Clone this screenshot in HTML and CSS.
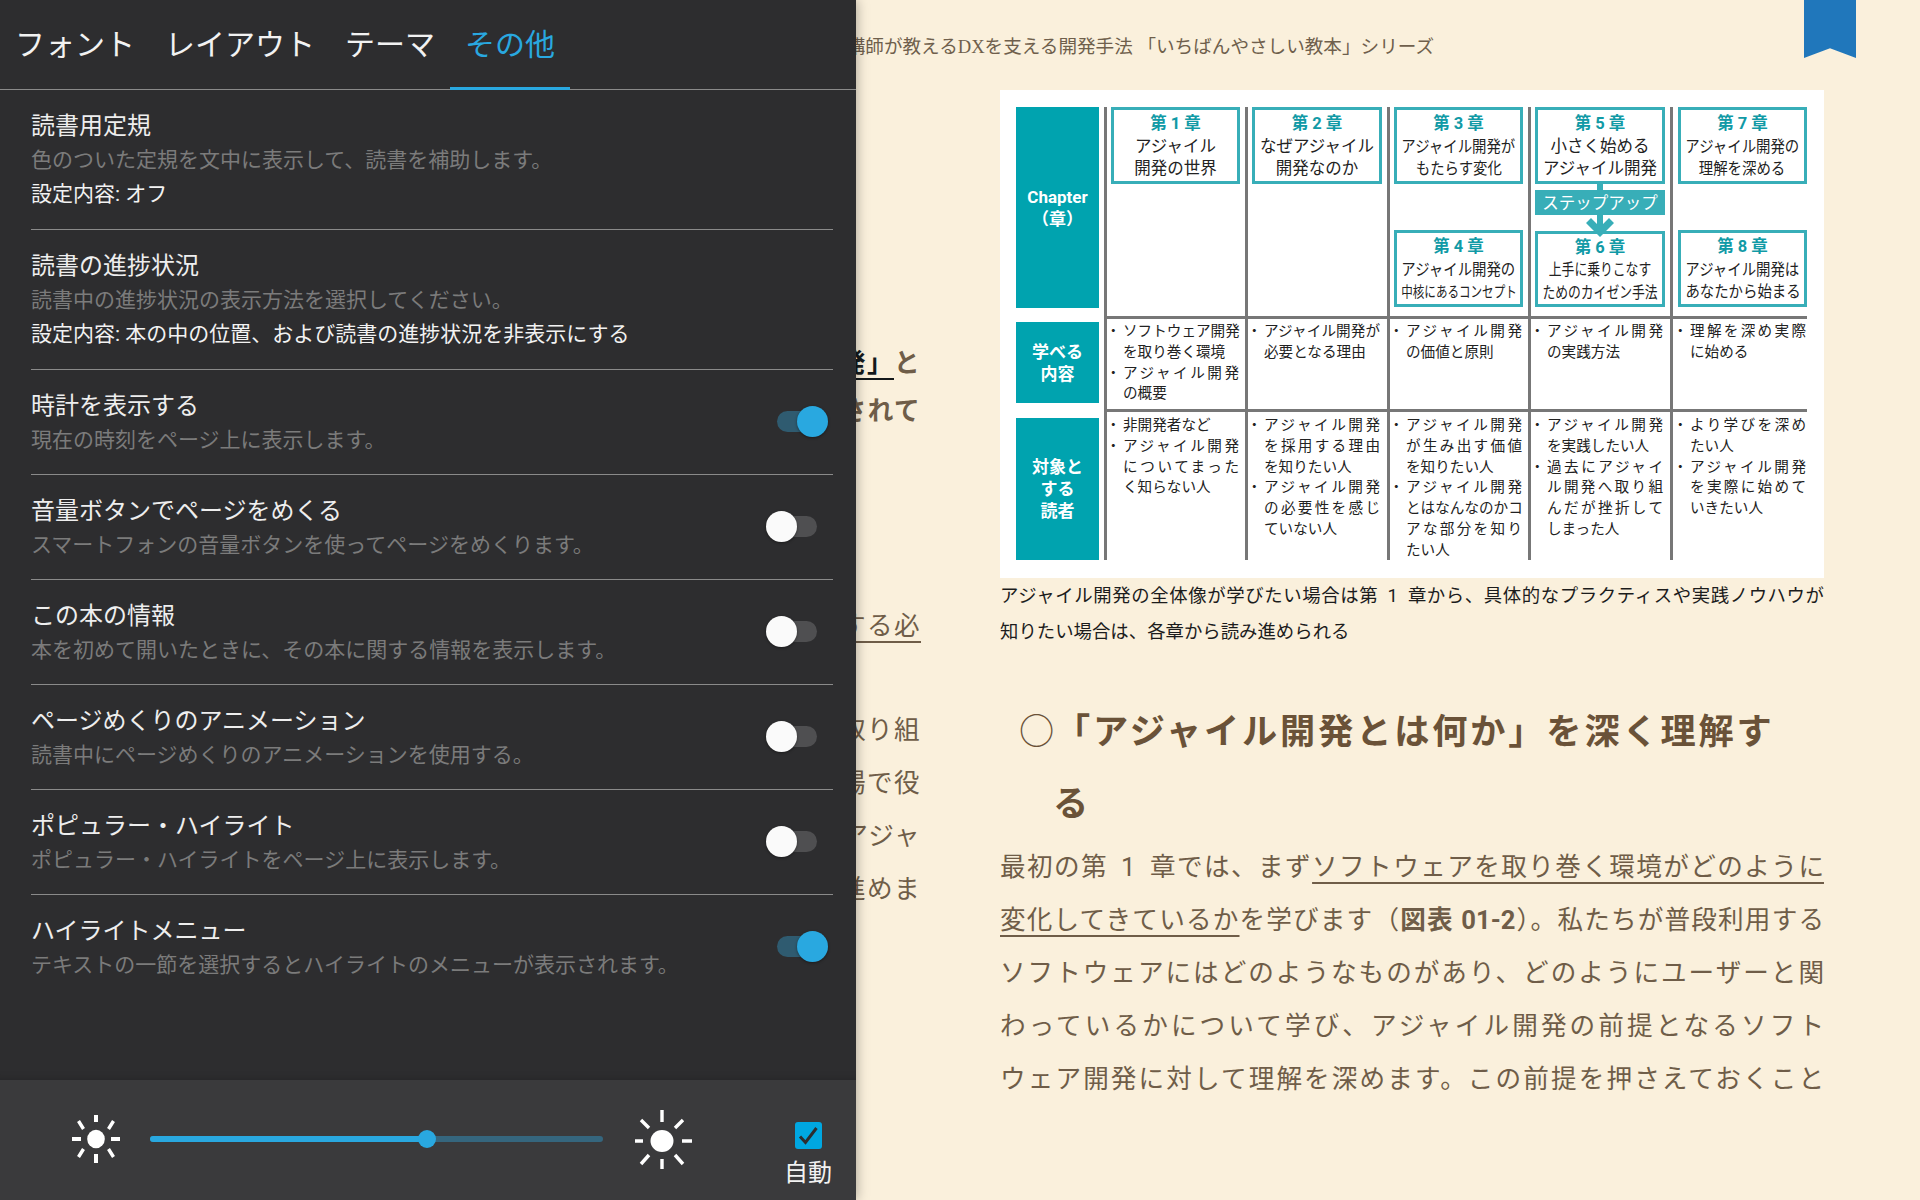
FILE: index.html
```html
<!DOCTYPE html>
<html lang="ja">
<head>
    <meta charset="UTF-8">
    <meta name="viewport" content="width=device-width, initial-scale=1.0">
    <title>読書設定</title>
    <link rel="stylesheet" href="styles.css">
</head>
<body>
<div class="reader">
    <!-- book page -->
    <header class="running-head">式講師が教えるDXを支える開発手法 「いちばんやさしい教本」シリーズ</header>
    <div class="bookmark"></div>

    <div class="columns">
        <div class="col-left">
            <p class="frag strong first"><span class="mark">発」</span>と</p>
            <p class="frag strong second">されて</p>
            <p class="frag gap1"><u>する必</u></p>
            <p class="frag gap2">取り組</p>
            <p class="frag">場で役</p>
            <p class="frag">アジャ</p>
            <p class="frag">進めま</p>
        </div>

        <div class="col-right">
            <div class="diagram">
                <div class="label label-1">Chapter<br>（章）</div>
                <div class="cell top">
                    <div class="box"><b>第 1 章</b><span>アジャイル</span><span>開発の世界</span></div>
                </div>
                <div class="cell top">
                    <div class="box"><b>第 2 章</b><span>なぜアジャイル</span><span>開発なのか</span></div>
                </div>
                <div class="cell top split">
                    <div class="box"><b>第 3 章</b><span class="fs14">アジャイル開発が</span><span class="fs14">もたらす変化</span></div>
                    <div class="box"><b>第 4 章</b><span class="fs14">アジャイル開発の</span><span class="fs12">中核にあるコンセプト</span></div>
                </div>
                <div class="cell top split">
                    <div class="box"><b>第 5 章</b><span>小さく始める</span><span>アジャイル開発</span></div>
                    <div class="step">
                        <i class="stem"></i>
                        <div class="step-bar">ステップアップ</div>
                        <svg class="step-arrow" width="28" height="22" viewBox="0 0 28 22"><path d="M11 0h6v9l6-6 5 5-14 14L0 8l5-5 6 6z"/></svg>
                    </div>
                    <div class="box"><b>第 6 章</b><span class="fs13">上手に乗りこなす</span><span class="fs13">ためのカイゼン手法</span></div>
                </div>
                <div class="cell top split last">
                    <div class="box"><b>第 7 章</b><span class="fs14">アジャイル開発の</span><span class="fs14">理解を深める</span></div>
                    <div class="box"><b>第 8 章</b><span class="fs14">アジャイル開発は</span><span class="fs14">あなたから始まる</span></div>
                </div>

                <div class="label label-2">学べる<br>内容</div>
                <div class="cell text">
                    <ul>
                        <li><div><span class="j">ソフトウェア開発</span><span>を取り巻く環境</span></div></li>
                        <li><div><span class="j">アジャイル開発</span><span>の概要</span></div></li>
                    </ul>
                </div>
                <div class="cell text">
                    <ul><li><div><span class="j">アジャイル開発が</span><span>必要となる理由</span></div></li></ul>
                </div>
                <div class="cell text">
                    <ul><li><div><span class="j">アジャイル開発</span><span>の価値と原則</span></div></li></ul>
                </div>
                <div class="cell text">
                    <ul><li><div><span class="j">アジャイル開発</span><span>の実践方法</span></div></li></ul>
                </div>
                <div class="cell text last">
                    <ul><li><div><span class="j">理解を深め実際</span><span>に始める</span></div></li></ul>
                </div>

                <div class="label label-3">対象と<br>する<br>読者</div>
                <div class="cell text lower">
                    <ul>
                        <li><div><span>非開発者など</span></div></li>
                        <li><div><span class="j">アジャイル開発</span><span class="j">についてまった</span><span>く知らない人</span></div></li>
                    </ul>
                </div>
                <div class="cell text lower">
                    <ul>
                        <li><div><span class="j">アジャイル開発</span><span class="j">を採用する理由</span><span>を知りたい人</span></div></li>
                        <li><div><span class="j">アジャイル開発</span><span class="j">の必要性を感じ</span><span>ていない人</span></div></li>
                    </ul>
                </div>
                <div class="cell text lower">
                    <ul>
                        <li><div><span class="j">アジャイル開発</span><span class="j">が生み出す価値</span><span>を知りたい人</span></div></li>
                        <li><div><span class="j">アジャイル開発</span><span class="j">とはなんなのかコ</span><span class="j">アな部分を知り</span><span>たい人</span></div></li>
                    </ul>
                </div>
                <div class="cell text lower">
                    <ul>
                        <li><div><span class="j">アジャイル開発</span><span>を実践したい人</span></div></li>
                        <li><div><span class="j">過去にアジャイ</span><span class="j">ル開発へ取り組</span><span class="j">んだが挫折して</span><span>しまった人</span></div></li>
                    </ul>
                </div>
                <div class="cell text lower last">
                    <ul>
                        <li><div><span class="j">より学びを深め</span><span>たい人</span></div></li>
                        <li><div><span class="j">アジャイル開発</span><span class="j">を実際に始めて</span><span>いきたい人</span></div></li>
                    </ul>
                </div>
            </div>

            <p class="caption">
                <span class="line">アジャイル開発の全体像が学びたい場合は第&ensp;1&ensp;章から、具体的なプラクティスや実践ノウハウが</span>
                <span>知りたい場合は、各章から読み進められる</span>
            </p>

            <h2 class="section-title"><span class="circle">○</span>「アジャイル開発とは何か」を深く理解する</h2>

            <p class="body-text">
                <span class="line">最初の第&ensp;1&ensp;章では、まず<u>ソフトウェアを取り巻く環境がどのように</u></span>
                <span class="line"><u>変化してきているか</u>を学びます（<b>図表 01-2</b>）。私たちが普段利用する</span>
                <span class="line">ソフトウェアにはどのようなものがあり、どのようにユーザーと関</span>
                <span class="line">わっているかについて学び、アジャイル開発の前提となるソフト</span>
                <span class="line">ウェア開発に対して理解を深めます。この前提を押さえておくこと</span>
            </p>
        </div>
    </div>

    <!-- settings panel, slides over the page -->
    <aside class="panel">
        <nav class="tabs">
            <a>フォント</a>
            <a>レイアウト</a>
            <a>テーマ</a>
            <a class="active">その他</a>
        </nav>

        <div class="settings">
            <div class="row">
                <div>
                    <h3>読書用定規</h3>
                    <p class="sub">色のついた定規を文中に表示して、読書を補助します。</p>
                    <p class="value">設定内容: オフ</p>
                </div>
            </div>
            <div class="row">
                <div>
                    <h3>読書の進捗状況</h3>
                    <p class="sub">読書中の進捗状況の表示方法を選択してください。</p>
                    <p class="value">設定内容: 本の中の位置、および読書の進捗状況を非表示にする</p>
                </div>
            </div>
            <div class="row">
                <div>
                    <h3>時計を表示する</h3>
                    <p class="sub">現在の時刻をページ上に表示します。</p>
                </div>
                <div class="toggle on"></div>
            </div>
            <div class="row">
                <div>
                    <h3>音量ボタンでページをめくる</h3>
                    <p class="sub">スマートフォンの音量ボタンを使ってページをめくります。</p>
                </div>
                <div class="toggle"></div>
            </div>
            <div class="row">
                <div>
                    <h3>この本の情報</h3>
                    <p class="sub">本を初めて開いたときに、その本に関する情報を表示します。</p>
                </div>
                <div class="toggle"></div>
            </div>
            <div class="row">
                <div>
                    <h3>ページめくりのアニメーション</h3>
                    <p class="sub">読書中にページめくりのアニメーションを使用する。</p>
                </div>
                <div class="toggle"></div>
            </div>
            <div class="row">
                <div>
                    <h3>ポピュラー・ハイライト</h3>
                    <p class="sub">ポピュラー・ハイライトをページ上に表示します。</p>
                </div>
                <div class="toggle"></div>
            </div>
            <div class="row">
                <div>
                    <h3>ハイライトメニュー</h3>
                    <p class="sub">テキストの一節を選択するとハイライトのメニューが表示されます。</p>
                </div>
                <div class="toggle on"></div>
            </div>
        </div>

        <div class="brightness">
            <svg class="sun-small" width="48" height="48" viewBox="-24 -24 48 48">
                <ellipse rx="8.800" ry="9.300" fill="#fff"/>
                <g stroke="#fff" stroke-width="4">
                    <path d="M0-24v7M0 15v9M-24 0h9M15 0h9"/>
                    <path stroke-width="3.400" d="M-17.500-18l5 8M17.500-18l-5 8M-17.500 18l5-8M17.500 18l-5-8"/>
                </g>
            </svg>
            <div class="slider">
                <div class="slider-fill"></div>
                <div class="slider-thumb"></div>
            </div>
            <svg class="sun-big" width="58" height="60" viewBox="-28 -31 58 60">
                <ellipse rx="11.500" ry="11" fill="#fff"/>
                <g stroke="#fff" stroke-width="3.400">
                    <path d="M0-31v12M0 18v10M-27 0h8M20 0h10"/>
                    <path d="M-21-21l8 8M21-21l-8 8M-21 23l8-9M21 23l-8-9"/>
                </g>
            </svg>
            <div class="auto">
                <svg width="27" height="27" viewBox="0 0 27 27">
                    <rect width="27" height="27" rx="3" fill="#00a7e1"/>
                    <path d="M5 14.500l5.500 6L21.500 6" fill="none" stroke="#2d2d2f" stroke-width="3"/>
                </svg>
                <span>自動</span>
            </div>
        </div>
    </aside>
</div>
</body>
</html>
```

FILE: styles.css
```css
* {
    box-sizing: border-box;
}
html, body {
    margin: 0;
    padding: 0;
}
body {
    font-family: Roboto, "Noto Sans CJK JP", sans-serif;
    background-color: #faf0dc;
}
p, h2, h3, ul {
    margin: 0;
    padding: 0;
}

.reader {
    position: relative;
    width: 1920px;
    height: 1200px;
    overflow: hidden;
}

/* book page */
.running-head {
    width: 1434px;
    height: 90px;
    padding-top: 34px;
    font-family: "Liberation Serif", "Noto Sans CJK JP", serif;
    font-size: 18.600px;
    line-height: 26px;
    color: #6f5f4c;
    text-align: right;
    white-space: nowrap;
}
.bookmark {
    position: absolute;
    top: 0;
    left: 1804px;
    width: 52px;
    height: 58px;
    background-color: #2077bb;
    clip-path: polygon(0 0, 100% 0, 100% 100%, 50% 83%, 0 100%);
}
.columns {
    display: flex;
}
.col-left {
    width: 921px;
    flex-shrink: 0;
    color: #6f5d48;
    font-size: 25.600px;
    letter-spacing: 1.400px;
    text-align: right;
}
.frag {
    height: 53px;
    line-height: 53px;
    white-space: nowrap;
}
.frag u {
    text-underline-offset: 6px;
}
.frag.first {
    margin-top: 249px;
    height: 48px;
    line-height: 48px;
}
.frag.second {
    height: 48px;
    line-height: 48px;
}
.frag.strong {
    font-weight: 700;
}
.frag.gap1 {
    margin-top: 165px;
}
.frag.gap2 {
    margin-top: 51px;
}
.mark {
    color: #14191b;
    text-decoration: underline;
    text-underline-offset: 6px;
}

.col-right {
    width: 824px;
    margin-left: 79px;
    flex-shrink: 0;
}

/* chapter chart */
.diagram {
    display: grid;
    grid-template-columns: 88px 141px 142px 141px 142px 137px;
    grid-template-rows: 209px 93px 151px;
    padding: 17px 0 18px 16px;
    height: 488px;
    background-color: #fff;
    color: #222;
}
.label {
    display: flex;
    align-items: center;
    justify-content: center;
    width: 83px;
    background-color: #00a3af;
    color: #fff;
    font-weight: 700;
    font-size: 17px;
    line-height: 22px;
    text-align: center;
}
.label-1 {
    margin-bottom: 8px;
}
.label-2 {
    margin: 6px 0;
    line-height: 22px;
}
.label-3 {
    margin-top: 9px;
}
.cell {
    border-left: 3px solid #777;
    padding: 0 5px 0 4px;
}
.cell.last {
    padding-left: 5px;
    padding-right: 0;
}
.cell.split {
    display: flex;
    flex-direction: column;
    justify-content: space-between;
    padding-bottom: 9px;
}
.box {
    height: 77px;
    border: 3px solid #38aeb8;
    display: flex;
    flex-direction: column;
    align-items: center;
    padding-top: 3px;
    font-size: 16.500px;
    line-height: 22.500px;
    white-space: nowrap;
}
.box b {
    color: #119aa6;
    font-size: 16.500px;
}
/* the long lines of the chart are set condensed */
.fs14 {
    font-size: 16px;
    transform: scaleX(0.9);
}
.fs13 {
    font-size: 16px;
    transform: scaleX(0.8);
}
.fs12 {
    font-size: 15px;
    transform: scaleX(0.77);
}
.step {
    display: flex;
    flex-direction: column;
    align-items: center;
    height: 47px;
}
.stem {
    width: 6px;
    height: 6px;
    flex-shrink: 0;
    background-color: #38aeb8;
}
.step-bar {
    width: 100%;
    height: 25px;
    flex-shrink: 0;
    line-height: 27px;
    background-color: #38aeb8;
    color: #fff;
    font-size: 16.500px;
    text-align: center;
    white-space: nowrap;
}
.step-arrow {
    flex-shrink: 0;
    fill: #38aeb8;
}
.cell.text {
    border-top: 3px solid #777;
    padding-top: 2px;
    font-size: 14.600px;
    line-height: 20.800px;
}
.cell.lower {
    padding-top: 3px;
}
.cell ul {
    list-style: none;
}
.cell li {
    display: flex;
}
.cell li::before {
    content: "・";
    flex: 0 0 17px;
    margin-left: -5px;
}
.cell li div {
    width: 116px;
}
.cell li span {
    display: block;
    white-space: nowrap;
}
.cell li .j {
    text-align: justify;
    text-align-last: justify;
}

.caption {
    font-size: 18.400px;
    line-height: 36px;
    color: #1c1c1c;
}
.caption span,
.body-text .line {
    display: block;
}
.caption .line,
.body-text .line {
    text-align: justify;
    text-align-last: justify;
    white-space: nowrap;
}
.section-title {
    margin-top: 46px;
    padding: 0 40px 0 53px;
    text-indent: -36px;
    font-size: 35.200px;
    font-weight: 700;
    line-height: 72px;
    letter-spacing: 2.850px;
    color: #6a5238;
}
.circle {
    font-weight: 400;
    margin-left: 2px;
    letter-spacing: 0.850px;
}
.body-text {
    margin-top: 1px;
    font-size: 25.600px;
    line-height: 53px;
    color: #6f5d48;
}
.body-text u {
    text-decoration-thickness: 2px;
    text-underline-offset: 6px;
}

/* settings panel */
.panel {
    position: absolute;
    top: 0;
    left: 0;
    width: 856px;
    height: 1200px;
    display: flex;
    flex-direction: column;
    background-color: #2d2d2f;
    box-shadow: 0 0 12px rgba(0, 0, 0, 0.35);
    color: #f2f2f2;
}
.tabs {
    display: flex;
    height: 90px;
    border-bottom: 1px solid #8a8a8a;
}
.tabs a {
    padding: 0 15px;
    height: 90px;
    font-size: 30px;
    line-height: 89px;
    white-space: nowrap;
}
.tabs a.active {
    color: #29a8e0;
    border-bottom: 3px solid #29a8e0;
}
.settings {
    flex: 1;
    padding-left: 31px;
    padding-right: 23px;
    box-shadow: inset 0 -10px 10px -10px rgba(0, 0, 0, 0.2);
}
.row {
    display: flex;
    justify-content: space-between;
    align-items: center;
    padding: 19px 16px 17px 0;
    border-bottom: 1px solid #8a8a8a;
}
.row:last-child {
    border-bottom: none;
}
.row h3 {
    font-size: 24px;
    font-weight: 400;
    line-height: 34px;
    color: #eee;
}
.sub {
    font-size: 21px;
    line-height: 34px;
    color: #7b7b7b;
}
.value {
    margin-bottom: 1px;
    font-size: 21px;
    line-height: 34px;
    color: #f2f2f2;
}
.toggle {
    position: relative;
    width: 40px;
    height: 21px;
    margin-bottom: 4px;
    border-radius: 11px;
    background-color: #4f4f51;
}
.toggle::after {
    content: "";
    position: absolute;
    top: -5px;
    left: -11px;
    width: 31px;
    height: 31px;
    border-radius: 50%;
    background-color: #fafafa;
    box-shadow: 0 1px 3px rgba(0, 0, 0, 0.4);
}
.toggle.on {
    background-color: #2f5b70;
}
.toggle.on::after {
    left: 20px;
    background-color: #29a8e0;
}

/* brightness bar */
.brightness {
    display: flex;
    align-items: center;
    height: 120px;
    padding-left: 72px;
    background-color: #3a3a3c;
}
.sun-small {
    flex-shrink: 0;
    margin-top: -2px;
}
.slider {
    position: relative;
    width: 453px;
    height: 6px;
    margin: -2px 31px 0 30px;
    border-radius: 3px;
    background-color: #35667e;
}
.slider-fill {
    width: 61%;
    height: 100%;
    border-radius: 3px;
    background-color: #29a8e0;
}
.slider-thumb {
    position: absolute;
    top: -6px;
    left: 268px;
    width: 18px;
    height: 18px;
    border-radius: 50%;
    background-color: #29a8e0;
}
.sun-big {
    flex-shrink: 0;
}
.auto {
    display: flex;
    flex-direction: column;
    align-items: center;
    margin-left: 92px;
    margin-top: 30px;
    font-size: 24px;
    line-height: 32px;
    color: #f2f2f2;
}
.auto svg {
    display: block;
    margin-bottom: 8px;
}
```
